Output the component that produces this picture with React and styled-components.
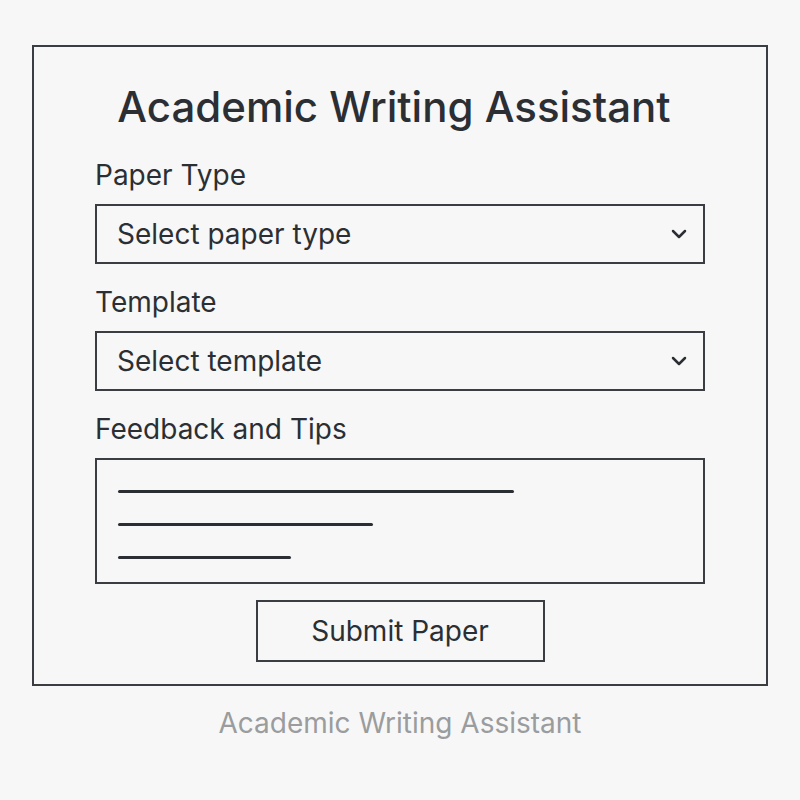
import React from 'react'
import styled, { createGlobalStyle } from 'styled-components'

const Global = createGlobalStyle`
  body {
    margin: 0;
    background: #f7f7f7;
    font-family: Inter, "Noto Sans", sans-serif;
    color: #2b2f34;
  }
`

const Page = styled.div`
  width: 800px;
  height: 800px;
  padding-top: 45px;
  box-sizing: border-box;
  display: flex;
  flex-direction: column;
  align-items: center;
`

const Card = styled.section`
  width: 736px;
  height: 641px;
  box-sizing: border-box;
  border: 2px solid #3a3d41;
  padding: 0 61px;
  display: flex;
  flex-direction: column;
`

const Title = styled.h1`
  margin: 32px 0 0;
  font-size: 42px;
  font-weight: 500;
  line-height: 56px;
  text-align: center;
  padding-right: 12px;
`

const Label = styled.div`
  font-size: 28px;
  line-height: 36px;
  margin-top: ${p => p.$top}px;
`

const Select = styled.div`
  height: 60px;
  box-sizing: border-box;
  border: 2px solid #3a3d41;
  margin-top: 11px;
  display: flex;
  align-items: center;
  justify-content: space-between;
  padding: 0 16px 0 20px;
  font-size: 28px;
`

const Feedback = styled.div`
  height: 126px;
  box-sizing: border-box;
  border: 2px solid #3a3d41;
  margin-top: 11px;
  padding: 30px 0 0 21px;
  display: flex;
  flex-direction: column;
  gap: 30px;
`

const Line = styled.div`
  height: 3px;
  width: ${p => p.$w}px;
  background: #2b2f34;
  border-radius: 2px;
`

const Button = styled.button`
  align-self: center;
  margin-top: 16px;
  width: 289px;
  height: 62px;
  border: 2px solid #3a3d41;
  background: transparent;
  font-family: inherit;
  font-size: 28px;
  color: #2b2f34;
`

const Footer = styled.div`
  margin-top: 20px;
  font-size: 28px;
  color: #9a9c9e;
`

const Chevron = () => (
  <svg width="16" height="10" viewBox="0 0 16 10">
    <path d="M2 2 L8 8 L14 2" fill="none" stroke="#2b2f34" strokeWidth="2.5" strokeLinecap="round" strokeLinejoin="round" />
  </svg>
)

export default function App() {
  return (
    <Page>
      <Global />
      <Card>
        <Title>Academic Writing Assistant</Title>
        <Label $top={22}>Paper Type</Label>
        <Select>Select paper type<Chevron /></Select>
        <Label $top={20}>Template</Label>
        <Select>Select template<Chevron /></Select>
        <Label $top={20}>Feedback and Tips</Label>
        <Feedback>
          <Line $w={396} />
          <Line $w={255} />
          <Line $w={173} />
        </Feedback>
        <Button>Submit Paper</Button>
      </Card>
      <Footer>Academic Writing Assistant</Footer>
    </Page>
  )
}
